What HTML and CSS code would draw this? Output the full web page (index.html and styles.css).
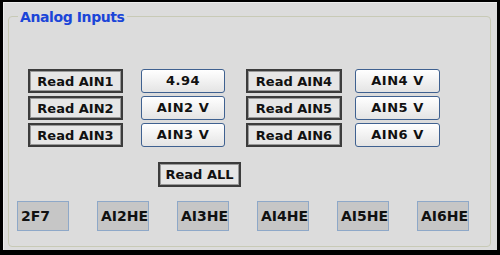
FILE: index.html
```html
<!DOCTYPE html>
<html lang="en">
<head>
    <meta charset="UTF-8">
    <title>Analog Inputs</title>
    <link rel="stylesheet" href="styles.css">
</head>
<body>

<div class="window">
    <div class="group">
        <h2 class="group-title">Analog Inputs</h2>

        <div class="ain-grid">
            <button class="btn-read">Read AIN1</button>
            <div class="value">4.94</div>
            <button class="btn-read">Read AIN4</button>
            <div class="value">AIN4 V</div>

            <button class="btn-read">Read AIN2</button>
            <div class="value">AIN2 V</div>
            <button class="btn-read">Read AIN5</button>
            <div class="value">AIN5 V</div>

            <button class="btn-read">Read AIN3</button>
            <div class="value">AIN3 V</div>
            <button class="btn-read">Read AIN6</button>
            <div class="value">AIN6 V</div>
        </div>

        <button class="btn-read btn-all">Read ALL</button>

        <div class="hex-row">
            <div class="hex">2F7</div>
            <div class="hex">AI2HE</div>
            <div class="hex">AI3HE</div>
            <div class="hex">AI4HE</div>
            <div class="hex">AI5HE</div>
            <div class="hex">AI6HE</div>
        </div>
    </div>
</div>

</body>
</html>
```

FILE: styles.css
```css
* { box-sizing: border-box; }

body {
    margin: 0;
    background: #000;
    font-family: "DejaVu Sans", sans-serif;
    width: 500px;
    height: 255px;
    overflow: hidden;
}

/* --- Ventana --- */
.window {
    margin: 2px 3px 0 3px;
    width: 494px;
    height: 248px;
    background: #dcdcdc;
    border-top: 1px solid #ececec;
    border-left: 1px solid #ececec;
    padding: 13px 6px 3px 4px;
}

.group {
    height: 231px;
    border: 1px solid #c8cab6;
    border-radius: 4px;
}

.group-title {
    display: block;
    width: max-content;
    margin: -8px 0 0 9px;
    padding: 0 2px;
    background: #dcdcdc;
    color: #1b45d8;
    font-size: 14px;
    letter-spacing: -0.4px;
    font-weight: bold;
    line-height: 16px;
}

/* --- Botones y valores --- */
.ain-grid {
    display: grid;
    grid-template-columns: 95px 84px 96px 85px;
    grid-auto-rows: 24px;
    column-gap: 18px;
    row-gap: 3px;
    margin: 44px 0 0 19px;
    width: 460px;
}
.ain-grid .value:nth-child(4n+4) { margin-left: -2px; width: 85px; }
.ain-grid .btn-read:nth-child(4n+3) { margin-left: 3px; width: 96px; }

.btn-read {
    display: block;
    font-family: inherit;
    font-size: 13px;
    font-weight: bold;
    color: #111;
    background: #e6e6e6;
    border: 2px solid #3c3c3c;
    box-shadow: inset 0 0 0 1px #9a9a9a;
    padding: 0;
    height: 24px;
}

.value {
    font-size: 13px;
    font-weight: bold;
    letter-spacing: 0.5px;
    color: #111;
    text-align: center;
    line-height: 22px;
    border: 1px solid #3f6190;
    border-radius: 3px;
    background: linear-gradient(#ffffff, #e4e4e4);
}

.btn-all {
    width: 83px;
    height: 25px;
    margin: 15px 0 0 149px;
}

/* --- Registros HEX --- */
.hex-row {
    display: flex;
    gap: 28px;
    margin: 14px 0 0 8px;
}

.hex {
    width: 52px;
    height: 30px;
    background: #c6c6c6;
    border: 1px solid #8ea8c8;
    padding-left: 3px;
    font-size: 14px;
    font-weight: bold;
    line-height: 28px;
    color: #111;
    white-space: nowrap;
    overflow: hidden;
}
```
